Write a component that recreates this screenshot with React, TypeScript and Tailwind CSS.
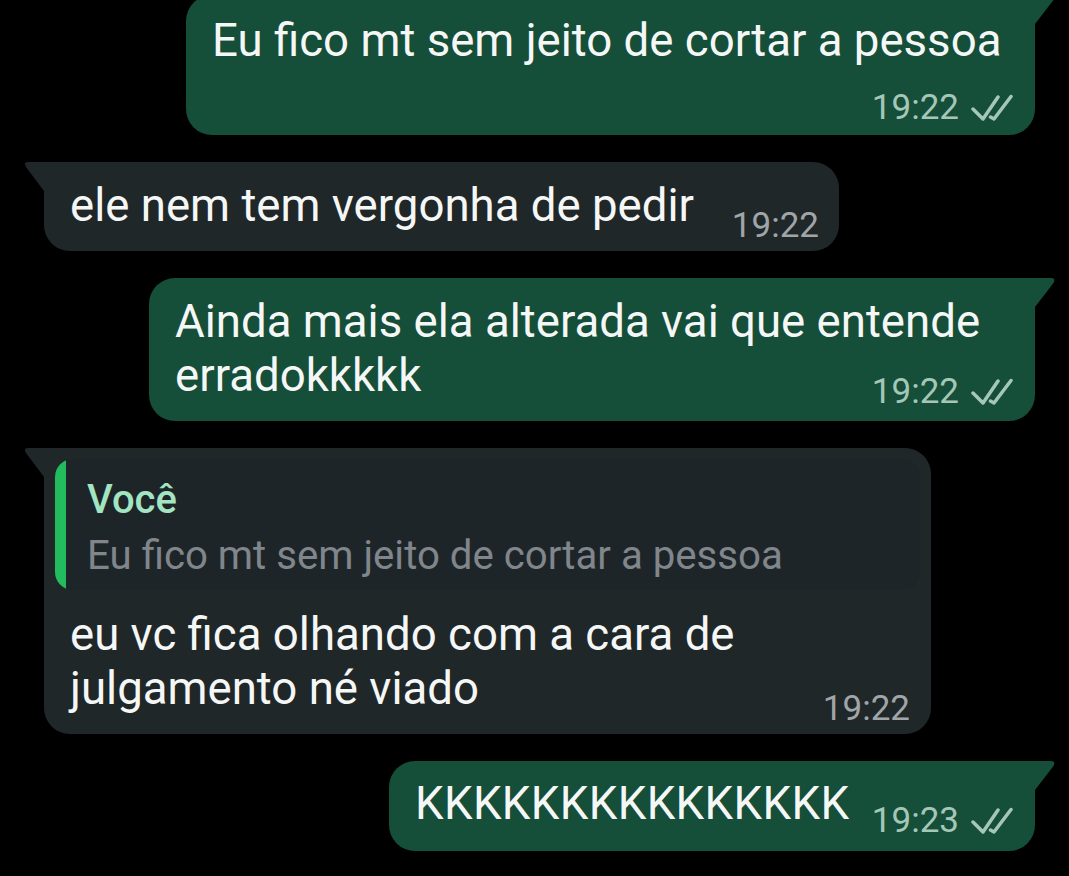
import type { ReactNode } from 'react';

const FONT = "font-['Roboto',sans-serif]";

function Ticks() {
  return (
    <svg width="42" height="27" viewBox="0 0 42 27" fill="none" stroke="#a5c7b8" strokeWidth="3.5" strokeLinecap="round" strokeLinejoin="round" className="ml-[12px] mb-[6px]">
      <path d="M2 15 L12 25 L27 3" />
      <path d="M19.500 23 L23 25 L40 2.500" />
    </svg>
  );
}

function Meta({ time, sent }: { time: string; sent?: boolean }) {
  return (
    <div className={`flex items-end text-[35px] leading-[38px] ${sent ? 'text-[#a5c7b8]' : 'text-[#a0a5a8]'}`}>
      {time}
      {sent && <Ticks />}
    </div>
  );
}

function Tail({ sent }: { sent?: boolean }) {
  if (sent) {
    return (
      <svg width="40" height="40" viewBox="0 0 40 40" className="absolute top-0 right-[-20px]">
        <path d="M0 0 H36 Q41 0 38.500 5 L20 29 V40 H0 Z" fill="#154e39" />
      </svg>
    );
  }
  return (
    <svg width="40" height="40" viewBox="0 0 40 40" className="absolute top-0 left-[-20px]">
      <path d="M40 0 H4 Q-1 0 2 5 L20 29 V40 H40 Z" fill="#202729" />
    </svg>
  );
}

function Bubble({ sent, className, children }: { sent?: boolean; className: string; children: ReactNode }) {
  return (
    <div className={`relative ${sent ? 'self-end bg-[#154e39] rounded-l-[26px] rounded-br-[26px]' : 'self-start bg-[#202729] rounded-r-[26px] rounded-bl-[26px]'} ${className}`}>
      <Tail sent={sent} />
      <div className="relative">{children}</div>
    </div>
  );
}

export default function App() {
  return (
    <div className={`h-[876px] w-[1069px] overflow-hidden bg-black text-[#f5f7f6] ${FONT}`}>
      <div className="flex flex-col gap-[27px] pl-[44px] pr-[34px] text-[45.6px] leading-[54px]">
        <Bubble sent className="w-[849px] h-[140px] -mt-[5px] pl-[26px] pr-[22px] pt-[19px]">
          <div className="whitespace-nowrap">Eu fico mt sem jeito de cortar a pessoa</div>
          <div className="flex justify-end mt-[21px]">
            <Meta time="19:22" sent />
          </div>
        </Bubble>

        <Bubble className="w-[795px] h-[89px] pl-[26px] pr-[20px] pt-[17px]">
          <div className="flex justify-between items-end">
            <span className="whitespace-nowrap">ele nem tem vergonha de pedir</span>
            <div className="-mb-[12px]">
              <Meta time="19:22" />
            </div>
          </div>
        </Bubble>

        <Bubble sent className="w-[886px] h-[143px] pl-[26px] pr-[22px] pt-[17px]">
          <div className="whitespace-nowrap">Ainda mais ela alterada vai que entende</div>
          <div className="flex justify-between items-end">
            <span>erradokkkkk</span>
            <div className="-mb-[8px]">
              <Meta time="19:22" sent />
            </div>
          </div>
        </Bubble>

        <Bubble className="w-[887px] h-[286px] pl-[11px] pr-[11px] pt-[11px]">
          <div className="flex h-[131px] rounded-[18px] bg-[#1e2529] overflow-hidden">
            <div className="w-[11px] shrink-0 bg-[#22bb5e] rounded-l-[14px]" />
            <div className="pl-[21px] pt-[16px]">
              <div className="text-[40px] leading-[50px] font-medium text-[#a3e4c2]">Você</div>
              <div className="text-[40.200px] leading-[54px] mt-[4px] text-[#80868b] whitespace-nowrap">Eu fico mt sem jeito de cortar a pessoa</div>
            </div>
          </div>
          <div className="pl-[15px] pr-[10px] mt-[18px]">
            <div className="whitespace-nowrap">eu vc fica olhando com a cara de</div>
            <div className="flex justify-between items-end">
              <span>julgamento né viado</span>
              <div className="-mb-[12px]">
                <Meta time="19:22" />
              </div>
            </div>
          </div>
        </Bubble>

        <Bubble sent className="w-[646px] h-[90px] pl-[26px] pr-[22px] pt-[16px]">
          <div className="flex justify-between items-end">
            <span className="whitespace-nowrap tracking-[0.35px]">KKKKKKKKKKKKKKK</span>
            <div className="-mb-[9px]">
              <Meta time="19:23" sent />
            </div>
          </div>
        </Bubble>
      </div>
    </div>
  );
}
